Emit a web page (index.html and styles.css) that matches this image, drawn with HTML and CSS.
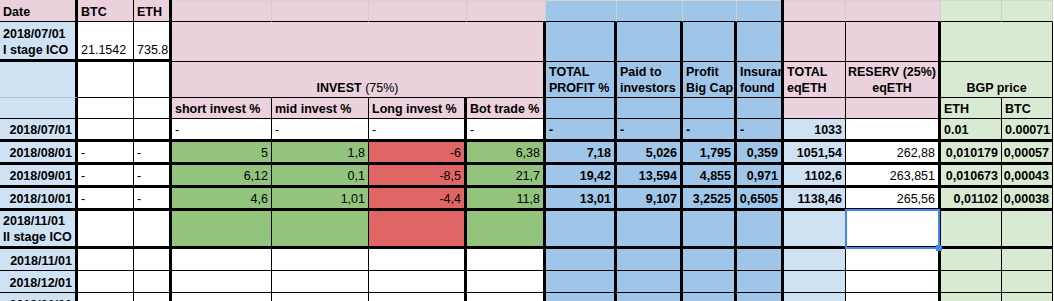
FILE: index.html
```html
<!DOCTYPE html>
<html>
<head>
<meta charset="utf-8">
<link rel="stylesheet" href="styles.css">
</head>
<body>
<div class="sheet">
  <!-- row 1 -->
  <div class="c pk r3 b">Date</div>
  <div class="c pk b">BTC</div>
  <div class="c pk r3 b">ETH</div>
  <div class="c pk rg top"></div>
  <div class="c pk rg top"></div>
  <div class="c pk rg top"></div>
  <div class="c pk rg top"></div>
  <div class="c bl rg top"></div>
  <div class="c bl rg top"></div>
  <div class="c bl rg top"></div>
  <div class="c bl r3 top"></div>
  <div class="c pk rg top"></div>
  <div class="c pk rg top"></div>
  <div class="c lg rg top"></div>
  <div class="c lg rg top"></div>

  <!-- row 2 -->
  <div class="c lb r3 b3 b"><span>2018/07/01<br>I stage ICO</span></div>
  <div class="c wh b3">21.1542</div>
  <div class="c wh r3 b3">735.8</div>
  <div class="c pk r3 s4"></div>
  <div class="c bl r3"></div>
  <div class="c bl r3"></div>
  <div class="c bl r3"></div>
  <div class="c bl r3"></div>
  <div class="c pk"></div>
  <div class="c pk r3"></div>
  <div class="c lg s2"></div>

  <!-- row 3 -->
  <div class="c lb r3 bg"></div>
  <div class="c wh"></div>
  <div class="c wh r3"></div>
  <div class="c pk r3 s4 ct"><span><b>INVEST</b> (75%)</span></div>
  <div class="c bl r3 b"><span>TOTAL<br>PROFIT %</span></div>
  <div class="c bl r3 b"><span>Paid to<br>investors</span></div>
  <div class="c bl r3 b"><span>Profit<br>Big Cap</span></div>
  <div class="c bl r3 b"><span>Insurance<br>found</span></div>
  <div class="c pk b"><span>TOTAL<br>eqETH</span></div>
  <div class="c pk r3 b ct"><span>RESERV (25%)<br>eqETH</span></div>
  <div class="c lg s2 b ct">BGP price</div>

  <!-- row 4 -->
  <div class="c lb r3"></div>
  <div class="c wh"></div>
  <div class="c wh r3"></div>
  <div class="c pk b">short invest %</div>
  <div class="c pk b">mid invest %</div>
  <div class="c pk r3 b">Long invest %</div>
  <div class="c pk r3 b">Bot trade %</div>
  <div class="c bl r3"></div>
  <div class="c bl r3"></div>
  <div class="c bl r3"></div>
  <div class="c bl r3"></div>
  <div class="c pk"></div>
  <div class="c pk r3"></div>
  <div class="c lg b">ETH</div>
  <div class="c lg b">BTC</div>

  <!-- row 5 -->
  <div class="c lb r3 b3 b rt">2018/07/01</div>
  <div class="c wh b3"></div>
  <div class="c wh r3 b3"></div>
  <div class="c wh b3">-</div>
  <div class="c wh b3">-</div>
  <div class="c wh r3 b3">-</div>
  <div class="c wh r3 b3">-</div>
  <div class="c bl r3 b3 b">-</div>
  <div class="c bl r3 b3 b">-</div>
  <div class="c bl r3 b3 b">-</div>
  <div class="c bl r3 b3 b">-</div>
  <div class="c lb b3 b rt">1033</div>
  <div class="c wh r3 b3"></div>
  <div class="c lg b3 b">0.01</div>
  <div class="c lg b3 b">0.00071</div>

  <!-- row 6 -->
  <div class="c lb r3 b3 b rt">2018/08/01</div>
  <div class="c wh b3">-</div>
  <div class="c wh r3 b3">-</div>
  <div class="c gr b3 rt">5</div>
  <div class="c gr b3 rt">1,8</div>
  <div class="c rd r3 b3 rt">-6</div>
  <div class="c gr r3 b3 rt">6,38</div>
  <div class="c bl r3 b3 b rt">7,18</div>
  <div class="c bl r3 b3 b rt">5,026</div>
  <div class="c bl r3 b3 b rt">1,795</div>
  <div class="c bl r3 b3 b rt">0,359</div>
  <div class="c lb b3 b rt">1051,54</div>
  <div class="c wh r3 b3 rt">262,88</div>
  <div class="c lg b3 b rt">0,010179</div>
  <div class="c lg b3 b rt">0,00057</div>

  <!-- row 7 -->
  <div class="c lb r3 b3 b rt">2018/09/01</div>
  <div class="c wh b3">-</div>
  <div class="c wh r3 b3">-</div>
  <div class="c gr b3 rt">6,12</div>
  <div class="c gr b3 rt">0,1</div>
  <div class="c rd r3 b3 rt">-8,5</div>
  <div class="c gr r3 b3 rt">21,7</div>
  <div class="c bl r3 b3 b rt">19,42</div>
  <div class="c bl r3 b3 b rt">13,594</div>
  <div class="c bl r3 b3 b rt">4,855</div>
  <div class="c bl r3 b3 b rt">0,971</div>
  <div class="c lb b3 b rt">1102,6</div>
  <div class="c wh r3 b3 rt">263,851</div>
  <div class="c lg b3 b rt">0,010673</div>
  <div class="c lg b3 b rt">0,00043</div>

  <!-- row 8 -->
  <div class="c lb r3 b3 b rt">2018/10/01</div>
  <div class="c wh b3">-</div>
  <div class="c wh r3 b3">-</div>
  <div class="c gr b3 rt">4,6</div>
  <div class="c gr b3 rt">1,01</div>
  <div class="c rd r3 b3 rt">-4,4</div>
  <div class="c gr r3 b3 rt">11,8</div>
  <div class="c bl r3 b3 b rt">13,01</div>
  <div class="c bl r3 b3 b rt">9,107</div>
  <div class="c bl r3 b3 b rt">3,2525</div>
  <div class="c bl r3 b3 b rt">0,6505</div>
  <div class="c lb b3 b rt">1138,46</div>
  <div class="c wh r3 b3 rt">265,56</div>
  <div class="c lg b3 b rt">0,01102</div>
  <div class="c lg b3 b rt">0,00038</div>

  <!-- row 9 -->
  <div class="c lb r3 b3 b"><span>2018/11/01<br>II stage ICO</span></div>
  <div class="c wh b3"></div>
  <div class="c wh r3 b3"></div>
  <div class="c gr b3"></div>
  <div class="c gr b3"></div>
  <div class="c rd r3 b3"></div>
  <div class="c gr r3 b3"></div>
  <div class="c bl r3 b3"></div>
  <div class="c bl r3 b3"></div>
  <div class="c bl r3 b3"></div>
  <div class="c bl r3 b3"></div>
  <div class="c lb b3"></div>
  <div class="c wh r3 b3 selected"><div class="sel-box"></div><div class="sel-handle"></div></div>
  <div class="c lg b3"></div>
  <div class="c lg b3"></div>

  <!-- row 10 -->
  <div class="c lb r3 b rt">2018/11/01</div>
  <div class="c wh"></div>
  <div class="c wh r3"></div>
  <div class="c wh"></div>
  <div class="c wh"></div>
  <div class="c wh r3"></div>
  <div class="c wh r3"></div>
  <div class="c bl r3"></div>
  <div class="c bl r3"></div>
  <div class="c bl r3"></div>
  <div class="c bl r3"></div>
  <div class="c lb"></div>
  <div class="c wh r3"></div>
  <div class="c lg"></div>
  <div class="c lg"></div>

  <!-- row 11 -->
  <div class="c lb r3 b rt">2018/12/01</div>
  <div class="c wh"></div>
  <div class="c wh r3"></div>
  <div class="c wh"></div>
  <div class="c wh"></div>
  <div class="c wh r3"></div>
  <div class="c wh r3"></div>
  <div class="c bl r3"></div>
  <div class="c bl r3"></div>
  <div class="c bl r3"></div>
  <div class="c bl r3"></div>
  <div class="c lb"></div>
  <div class="c wh r3"></div>
  <div class="c lg"></div>
  <div class="c lg"></div>

  <!-- row 12 -->
  <div class="c lb r3 b rt">2019/01/01</div>
  <div class="c wh"></div>
  <div class="c wh r3"></div>
  <div class="c wh"></div>
  <div class="c wh"></div>
  <div class="c wh r3"></div>
  <div class="c wh r3"></div>
  <div class="c bl r3"></div>
  <div class="c bl r3"></div>
  <div class="c bl r3"></div>
  <div class="c bl r3"></div>
  <div class="c lb"></div>
  <div class="c wh r3"></div>
  <div class="c lg"></div>
  <div class="c lg"></div>
</div>
</body>
</html>
```

FILE: styles.css
```css
html, body {
  margin: 0;
  padding: 0;
  background: #ffffff;
  overflow: hidden;
}

.sheet {
  display: grid;
  grid-template-columns: 78px 56px 38px 100px 97px 98px 79px 71px 66px 54px 47px 62px 95px 61px 51px;
  grid-template-rows: 22px 40px 36px 21px 23px 23px 23px 23px 38px 22px 22px 22px;
  font-family: "Liberation Sans", Arial, sans-serif;
  font-size: 12.5px;
  line-height: 16px;
  color: #000;
}

.c {
  box-sizing: border-box;
  display: flex;
  align-items: flex-end;
  justify-content: flex-start;
  padding: 0 3px 1px 3px;
  overflow: hidden;
  white-space: nowrap;
  border-right: 1px solid #000;
  border-bottom: 1px solid #000;
  min-width: 0;
}

.c > span {
  display: block;
}

/* borders */
.r3 { border-right-width: 3px; }
.rg { border-right-color: #cfcfcf; }
.b3 { border-bottom-width: 3px; }
.bg { border-bottom-color: #b3c6d8; }
.top { box-shadow: inset 0 1px 0 #d4d4d4; }

/* spans */
.s4 { grid-column: span 4; }
.s2 { grid-column: span 2; }

/* alignment & weight */
.rt { justify-content: flex-end; }
.ct { justify-content: center; text-align: center; }
.b { font-weight: bold; }

/* fills */
.pk { background: #ead1dc; }
.lb { background: #cfe2f3; }
.bl { background: #9fc5e8; }
.lg { background: #d9ead3; }
.gr { background: #93c47d; }
.rd { background: #e06666; }
.wh { background: #ffffff; }

/* selection overlay */
.selected {
  position: relative;
  overflow: visible;
}

.sel-box {
  position: absolute;
  left: -1px;
  top: -2px;
  width: 95px;
  height: 40px;
  box-sizing: border-box;
  border: 2px solid #4285f4;
}

.sel-handle {
  position: absolute;
  left: 90px;
  top: 34px;
  width: 6px;
  height: 6px;
  background: #4285f4;
  z-index: 2;
}
```
